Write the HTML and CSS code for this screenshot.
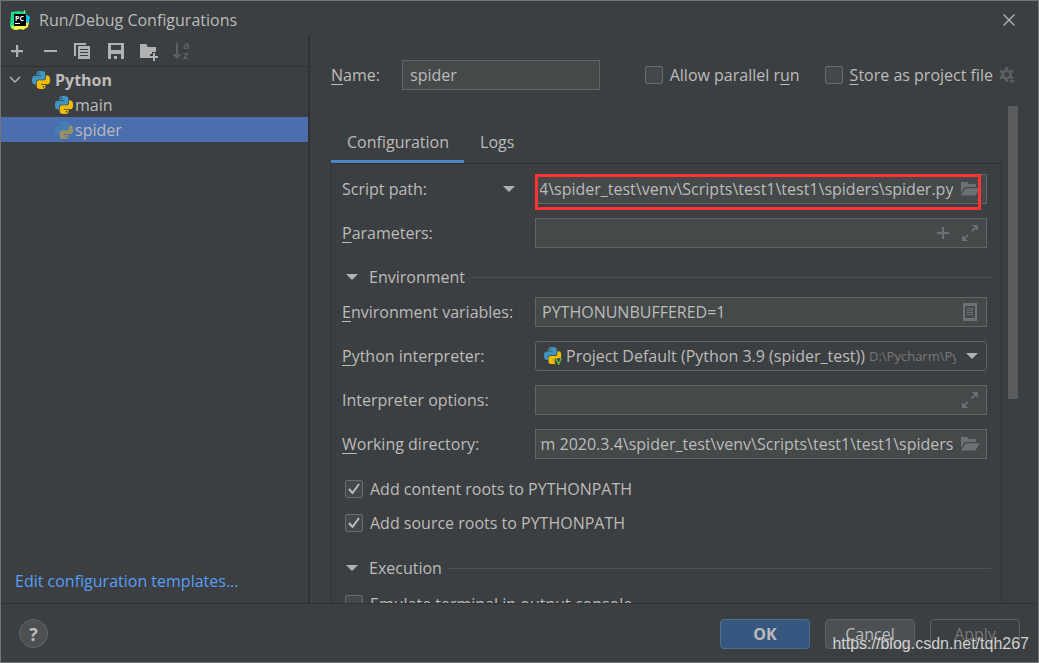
FILE: index.html
```html
<!DOCTYPE html>
<html lang="en">
<head>
<meta charset="utf-8">
<title>Run/Debug Configurations</title>
<link rel="stylesheet" href="styles.css">
</head>
<body>
<svg class="sprite" aria-hidden="true">
  <symbol id="python" viewBox="0 0 24 24">
    <path fill="#4094c2" d="M14.25.18l.9.2.73.26.59.3.45.32.34.34.25.34.16.33.1.3.04.26.02.2-.01.13V8.5l-.05.63-.13.55-.21.46-.26.38-.3.31-.33.25-.35.19-.35.14-.33.1-.3.07-.26.04-.21.02H8.77l-.69.05-.59.14-.5.22-.41.27-.33.32-.27.35-.2.36-.15.37-.1.35-.07.32-.04.27-.02.21v3.06H3.17l-.21-.03-.28-.07-.32-.12-.35-.18-.36-.26-.36-.36-.35-.46-.32-.59-.28-.73-.21-.88-.14-1.05-.05-1.23.06-1.22.16-1.04.24-.87.32-.71.36-.57.4-.44.42-.33.42-.24.4-.16.36-.1.32-.05.24-.01h.16l.06.01h8.16v-.83H6.18l-.01-2.75-.02-.37.05-.34.11-.31.17-.28.25-.26.31-.23.38-.2.44-.18.51-.15.58-.12.64-.1.71-.06.77-.04.84-.02 1.27.05zm-6.3 1.98l-.23.33-.08.41.08.41.23.34.33.22.41.09.41-.09.33-.22.23-.34.08-.41-.08-.41-.23-.33-.33-.22-.41-.09-.41.09z"/>
    <path fill="#f0bd06" d="M21.1 6.11l.28.06.32.12.35.18.36.27.36.35.35.47.32.59.28.73.21.88.14 1.04.05 1.23-.06 1.23-.16 1.04-.24.86-.32.71-.36.57-.4.45-.42.33-.42.24-.4.16-.36.09-.32.05-.24.02-.16-.01h-8.22v.82h5.84l.01 2.76.02.36-.05.34-.11.31-.17.29-.25.25-.31.24-.38.2-.44.17-.51.15-.58.13-.64.09-.71.07-.77.04-.84.01-1.27-.04-1.07-.14-.9-.2-.73-.25-.59-.3-.45-.33-.34-.34-.25-.34-.16-.33-.1-.3-.04-.25-.02-.2.01-.13v-5.34l.05-.64.13-.54.21-.46.26-.38.3-.32.33-.24.35-.2.35-.14.33-.1.3-.06.26-.04.21-.02.13-.01h5.84l.69-.05.59-.14.5-.21.41-.28.33-.32.27-.35.2-.36.15-.36.1-.35.07-.32.04-.28.02-.21V6.07h2.09l.14.01zm-6.47 14.25l-.23.33-.08.41.08.41.23.33.33.23.41.08.41-.08.33-.23.23-.33.08-.41-.08-.41-.23-.33-.33-.23-.41-.08-.41.08z"/>
  </symbol>
  <symbol id="caret" viewBox="0 0 12 8"><path fill="#afb1b3" d="M0 1h12L6 7z"/></symbol>
  <symbol id="folder" viewBox="0 0 20 16">
    <path fill="currentColor" d="M1 1h6l2 2h7v3H4.500L1 12zM5.300 7.200H19.500L15.600 14.500H1z"/>
  </symbol>
  <symbol id="expand" viewBox="0 0 18 18">
    <path fill="currentColor" d="M11 1h6v6l-2.200-2.200-3.400 3.300-1.300-1.300 3.300-3.400zM1 11l2.200 2.200 3.400-3.300 1.300 1.300-3.300 3.400L7 17H1z"/>
  </symbol>
</svg>

<div class="dialog">
  <header class="titlebar">
    <svg class="logo" viewBox="0 0 20 20" aria-hidden="true">
      <path fill="#21d789" d="M1 2l8-1 5 1 1-2 1 4-2 14-11 1-3-3z"/>
      <path fill="#07c3f2" d="M16 4l4 3-1 5-4 1z"/>
      <path fill="#fcf84a" d="M3 17l13-4 3-1-1 5-5 3-2-1-5 1-4-1z"/>
      <path fill="#b5ef50" d="M13 2l2-2v3zM1 16l4-1v4l-4-1z"/>
      <path fill="#000" d="M4 4h12v12H4z"/>
      <text x="5" y="11" fill="#fff" class="logo-text">PC</text>
      <path fill="#fff" d="M5 13h5v1H5z"/>
    </svg>
    <h1>Run/Debug Configurations</h1>
    <button class="icon-button close" aria-label="Close"><svg width="12" height="12" viewBox="0 0 12 12"><path d="M.5.5l11 11M11.500.5L.5 11.500" stroke="#b4b6b8" stroke-width="1.300"/></svg></button>
  </header>

  <aside class="sidebar">
    <div class="toolbar">
      <button class="icon-button" aria-label="Add"><svg viewBox="0 0 18 18"><path fill="currentColor" d="M8 3h2.200v5H15v2.200h-4.800V15H8v-4.800H3V8h5z"/></svg></button>
      <button class="icon-button" aria-label="Remove"><svg viewBox="0 0 18 18"><path fill="currentColor" d="M3 8h13v2H3z"/></svg></button>
      <button class="icon-button" aria-label="Copy"><svg viewBox="0 0 18 18"><path fill="currentColor" fill-rule="evenodd" d="M0 1h12v2H2v11H0zM4 4h12v13H4zM6 7v1h8V7zM6 10v1h8v-1zM6 13v1h8v-1z"/></svg></button>
      <button class="icon-button" aria-label="Save"><svg viewBox="0 0 18 18"><path fill="currentColor" fill-rule="evenodd" d="M1 1h16v16h-3v-5H4v5H1zM4 3v5h10V3zM7 14h3v3H7z"/></svg></button>
      <button class="icon-button" aria-label="New folder"><svg viewBox="0 0 18 18"><path fill="currentColor" d="M0 2h6l2 3h8v5h-4v2h-2v4H0zM13 11h2v3h3v2h-3v3h-2v-3h-3v-2h3z"/></svg></button>
      <button class="icon-button" aria-label="Sort configurations" disabled><svg viewBox="0 0 18 18"><path fill="currentColor" d="M3 1h2v11h4l-5 5-5-5h4z"/><text x="10" y="7" class="sort-text">a</text><text x="10" y="17" class="sort-text">z</text></svg></button>
    </div>
    <ul class="tree">
      <li class="group"><svg class="chevron" viewBox="0 0 12 8"><path d="M1 1l5 5 5-5" fill="none" stroke="#afb1b3" stroke-width="1.500"/></svg><svg class="py"><use href="#python"/></svg><b>Python</b></li>
      <li><svg class="py"><use href="#python"/></svg>main</li>
      <li class="selected"><svg class="py"><use href="#python"/></svg>spider</li>
    </ul>
    <a class="templates" href="#">Edit configuration templates...</a>
  </aside>

  <main class="editor">
    <div class="name-row">
      <label class="name-label" for="name"><u>N</u>ame:</label>
      <input class="field name" id="name" value="spider">
      <label class="check"><input type="checkbox">Allow parallel r<u>u</u>n</label>
      <label class="check store"><input type="checkbox"><span><u>S</u>tore as project file</span></label>
      <button class="icon-button gear" aria-label="Project file options"><svg viewBox="0 0 18 18"><circle cx="8" cy="8" r="4.200" fill="none" stroke="currentColor" stroke-width="3"/><path stroke="currentColor" stroke-width="3" d="M8 0v3M8 13v3M1 4l3 1.700M12 10.300l3 1.700M1 12l3-1.700M12 5.700L15 4"/><path fill="currentColor" stroke="#3c3f41" d="M9.500 13.500h9L14 18z"/></svg></button>
    </div>

    <div class="scroll-area">
      <div class="content">
        <div class="tabs" role="tablist">
          <button class="tab active" role="tab" aria-selected="true">Configuration</button>
          <button class="tab" role="tab" aria-selected="false">Logs</button>
        </div>
        <form class="panel">
          <div class="row">
            <label for="script">Script path:</label>
            <svg class="caret"><use href="#caret"/></svg>
            <div class="field highlighted"><input class="path" id="script" value="4\spider_test\venv\Scripts\test1\test1\spiders\spider.py"><svg class="folder"><use href="#folder"/></svg></div>
          </div>
          <div class="row">
            <label for="params"><u>P</u>arameters:</label>
            <div class="field"><input id="params"><svg class="mini" viewBox="0 0 18 18"><path fill="currentColor" d="M8 3h2v5h5v2h-5v5H8v-5H3V8h5z"/></svg><svg class="mini"><use href="#expand"/></svg></div>
          </div>
          <h2><svg class="caret"><use href="#caret"/></svg>Environment</h2>
          <div class="row">
            <label for="env"><u>E</u>nvironment variables:</label>
            <div class="field"><input id="env" value="PYTHONUNBUFFERED=1"><svg class="mini" viewBox="0 0 18 18"><path fill="currentColor" fill-rule="evenodd" d="M2 0h14v18H2zM4 3v12h10V3zM6 5h6v1H6zM6 7h6v1H6zM6 9h6v1H6zM6 11h6v1H6z"/></svg></div>
          </div>
          <div class="row">
            <label for="interpreter"><u>P</u>ython interpreter:</label>
            <div class="field combo">
              <svg class="py" viewBox="0 0 24 24"><use href="#python" width="23" height="23"/><path d="M15 15h9v9h-9z" fill="#3c3f41"/><path d="M16 15l3.500 8 3.500-8" fill="none" stroke="#62b543" stroke-width="2"/></svg>
              <select id="interpreter"><option>Project Default (Python 3.9 (spider_test))</option></select>
              <span class="hint">D:\Pycharm\PyC</span>
              <svg class="caret"><use href="#caret"/></svg>
            </div>
          </div>
          <div class="row">
            <label for="options">Interpreter options:</label>
            <div class="field"><input id="options"><svg class="mini"><use href="#expand"/></svg></div>
          </div>
          <div class="row">
            <label for="workdir"><u>W</u>orking directory:</label>
            <div class="field"><input class="path" id="workdir" value="rm 2020.3.4\spider_test\venv\Scripts\test1\test1\spiders"><svg class="folder"><use href="#folder"/></svg></div>
          </div>
          <div class="options">
            <label class="check"><input type="checkbox" checked>Add content roots to PYTHONPATH</label>
            <label class="check"><input type="checkbox" checked>Add source roots to PYTHONPATH</label>
          </div>
          <h2><svg class="caret"><use href="#caret"/></svg>Execution</h2>
          <label class="check"><input type="checkbox">Emulate terminal in output console</label>
        </form>
      </div>
      <div class="scrollbar"><div class="thumb"></div></div>
    </div>
  </main>

  <footer class="footer">
    <button class="help" aria-label="Help">?</button>
    <button class="button primary">OK</button>
    <button class="button">Cancel</button>
    <button class="button" disabled>Apply</button>
    <span class="watermark">https://blog.csdn.net/tqh267</span>
  </footer>
</div>
<script src="script.js"></script>
</body>
</html>
```
FILE: styles.css
```css
* { box-sizing: border-box; }

body {
  margin: 0;
  background: #3c3f41;
  color: #bbbbbb;
  font: 16px/24px "Open Sans", "Noto Sans", sans-serif;
}

button, input, select { font: inherit; color: inherit; }
button { padding: 0; }
u { text-underline-offset: 3px; text-decoration-thickness: 1px; }
svg { display: block; flex: none; }
.sprite { position: absolute; width: 0; height: 0; }

.dialog {
  display: grid;
  grid-template: 35px minmax(0, 1fr) 59px / 309px minmax(0, 1fr);
  height: 100vh;
  border: 1px solid #737373;
}

.titlebar {
  grid-column: 1 / -1;
  display: flex;
  align-items: center;
  gap: 9px;
  padding: 2px 23px 0 9px;
}
.titlebar h1 { flex: 1; margin: 0; font-size: 16px; font-weight: 400; }
.logo { width: 20px; height: 20px; }
.logo-text { font: bold 7px "Open Sans", sans-serif; }

.icon-button { display: block; border: 0; background: none; color: #afb1b3; }
.icon-button svg { overflow: visible; }
.icon-button:disabled { color: #5c5f61; }

.sidebar {
  display: flex;
  flex-direction: column;
  border-right: 2px solid #323232;
}
.toolbar {
  display: flex;
  align-items: center;
  gap: 15px;
  height: 31px;
  padding-left: 7px;
  border-bottom: 1px solid #323232;
}
.toolbar svg { width: 18px; height: 18px; }
.sort-text { font: bold 11px "Open Sans", sans-serif; fill: currentColor; }

.tree { flex: 1; margin: 0; padding: 0; list-style: none; line-height: 22px; }
.tree li { display: flex; align-items: center; gap: 2px; height: 25px; padding-left: 54px; }
.tree .group { gap: 5px; padding-left: 8px; }
.tree .selected { background: #4b6eaf; }
.tree .selected svg { opacity: .45; }
.chevron { width: 12px; height: 8px; margin-right: 6px; }
.py { width: 18px; height: 18px; }
.templates { margin: 0 0 10px 14px; color: #589df6; text-decoration: none; }

.editor { display: flex; flex-direction: column; padding-left: 21px; min-width: 0; }
.name-row { display: flex; align-items: center; padding: 24px 22px 16px 0; }
.name-label { width: 71px; }
.name-row .name { width: 198px; margin-right: auto; padding: 0 7px; }
.name-row .store { margin-left: 25px; }
.gear { margin-left: 6px; color: #5c5f61; }
.gear svg { width: 17px; height: 17px; }

.field {
  display: flex;
  align-items: center;
  min-width: 0;
  height: 30px;
  border: 1px solid #646464;
  background: #45494a;
  color: #bbbbbb;
  outline: 0;
}
.field input { flex: 1; min-width: 0; padding: 0; border: 0; outline: 0; background: none; }
.field .path { text-align: right; }

.check { display: flex; align-items: center; white-space: pre; }
.check input {
  appearance: none;
  width: 18px;
  height: 18px;
  margin: 0 7px 0 0;
  border: 1px solid #6b6b6b;
  border-radius: 2px;
  background: #43494a;
}
.check input:checked {
  background: #43494a url("data:image/svg+xml,%3Csvg xmlns='http://www.w3.org/2000/svg' viewBox='0 0 16 16'%3E%3Cpath d='M3 8l3.500 4L13 3' fill='none' stroke='%23bbb' stroke-width='2'/%3E%3C/svg%3E");
}

.scroll-area { flex: 1; display: flex; gap: 6px; min-height: 0; padding-right: 20px; }
.content { flex: 1; display: flex; flex-direction: column; min-width: 0; overflow: hidden; }
.scrollbar { width: 10px; }
.thumb { height: 59%; background: #5a5b5c; }

.tabs { display: flex; flex: none; margin-top: 18px; height: 40px; }
.tab { padding: 0 15px 0 16px; border: 0; border-bottom: 4px solid transparent; background: none; }
.tab.active { border-bottom-color: #4a88c7; }
.panel {
  flex: 1 0 auto;
  padding: 10px 10px 0;
  border: 1px solid #323232;
  border-width: 0 1px;
  box-shadow: 0 -1px #323232;
}
.row {
  display: grid;
  grid-template-columns: 161px 32px minmax(0, 1fr);
  align-items: center;
  margin: 0 4px 14px 0;
}
.row .field { grid-column: 3; grid-row: 1; padding: 0 6px 0 6px; gap: 8px; color: #6b7073; }
.row .field input, .row select { color: #bbbbbb; }
.row label { grid-column: 1 / 3; grid-row: 1; white-space: nowrap; }
.row > .caret { grid-column: 2; grid-row: 1; }
.caret { width: 12px; height: 8px; }
.folder { width: 20px; height: 16px; }
.mini { width: 18px; height: 18px; margin-right: 1px; }
.row .field:has(.path) { padding-left: 4px; gap: 7px; }

.highlighted { position: relative; }
.highlighted::after {
  content: "";
  position: absolute;
  inset: -1px 5px -7px -1px;
  border: 3px solid #ff3333;
  pointer-events: none;
}

.row .combo { gap: 4px; padding: 0 8px; border-radius: 3px; background: none; }
.combo select {
  flex: none;
  appearance: none;
  padding: 0;
  border: 0;
  outline: 0;
  background: none;
}
.combo .hint { flex: 1; overflow: hidden; color: #777777; font-size: 13px; white-space: nowrap; }
.combo .caret { margin-left: 6px; }

.panel h2 {
  display: flex;
  align-items: center;
  margin: 17px 0 8px;
  padding-left: 4px;
  font-size: 16px;
  font-weight: 400;
}
.panel h2 .caret { margin-right: 11px; }
.panel h2::after { content: ""; flex: 1; height: 1px; margin-left: 6px; background: #515151; }
.options { display: grid; gap: 2px; }
.panel .check { height: 32px; padding-left: 3px; }

.footer {
  position: relative;
  grid-column: 1 / -1;
  display: flex;
  align-items: center;
  gap: 15px;
  padding: 1px 18px 0;
  border-top: 1px solid #323232;
}
.help {
  width: 29px;
  height: 29px;
  margin-right: auto;
  border: 1px solid #646667;
  border-radius: 50%;
  background: #4c5052;
  font-weight: 700;
  font-size: 18px;
}
.button { width: 90px; height: 30px; border: 1px solid #5e6060; border-radius: 4px; background: #4c5052; }
.button.primary { border-color: #4c708c; background: #365880; font-weight: 700; }
.button:disabled { background: none; color: #777777; }
.watermark {
  position: absolute;
  right: 9px;
  bottom: 6px;
  color: rgba(255, 255, 255, .75);
  font-family: "Liberation Sans", Arial, sans-serif;
}
```
FILE: script.js
```js
// Long paths show their last folder.
document.querySelectorAll(".path").forEach((input) => {
  input.scrollLeft = input.scrollWidth;
});
```
